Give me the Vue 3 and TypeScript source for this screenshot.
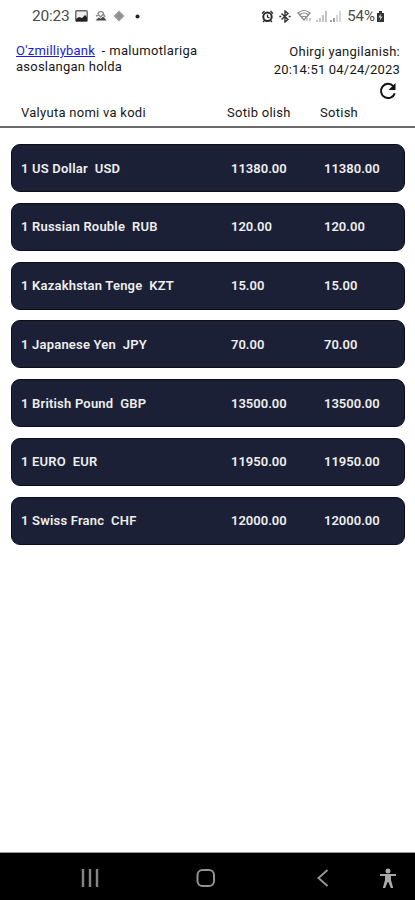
<script setup lang="ts">
interface Rate {
  name: string
  code: string
  buy: string
  sell: string
}

const rates: Rate[] = [
  { name: 'US Dollar', code: 'USD', buy: '11380.00', sell: '11380.00' },
  { name: 'Russian Rouble', code: 'RUB', buy: '120.00', sell: '120.00' },
  { name: 'Kazakhstan Tenge', code: 'KZT', buy: '15.00', sell: '15.00' },
  { name: 'Japanese Yen', code: 'JPY', buy: '70.00', sell: '70.00' },
  { name: 'British Pound', code: 'GBP', buy: '13500.00', sell: '13500.00' },
  { name: 'EURO', code: 'EUR', buy: '11950.00', sell: '11950.00' },
  { name: 'Swiss Franc', code: 'CHF', buy: '12000.00', sell: '12000.00' },
]
</script>

<template>
  <div class="screen">
    <header class="status">
      <div class="status-left">
        <span class="clock">20:23</span>
        <svg class="picture" width="13" height="12" viewBox="0 0 13 12">
          <rect x=".8" y=".8" width="11.4" height="10.4" rx="1" fill="#eee" stroke="#666" stroke-width="1.4" />
          <path d="M1 11V9l3-2 3 1 3-3 2 2v4z" fill="#222" />
        </svg>
        <svg class="weather" width="12" height="12" viewBox="0 0 13 12">
          <path d="M3 4a3.400 3.400 0 0 1 6.500-.5M1 6l3-1 2 2 3-3 2 3" fill="none" stroke="#888" stroke-width="1.500" />
          <path d="M.5 11 4 7.500l2 1.500 3-2.500 3.500 4.500z" fill="#444" />
        </svg>
        <svg class="diamond" width="12" height="12" viewBox="0 0 12 12">
          <path d="m6 .5 5.500 5.500L6 11.500.5 6z" fill="#999" />
          <path d="M3 6h6M6 3v6" stroke="#888" />
        </svg>
        <svg class="dot" width="5" height="5" viewBox="0 0 5 5"><circle cx="2.500" cy="2.500" r="2" fill="#222" /></svg>
      </div>
      <div class="status-right">
        <svg width="13" height="13" viewBox="0 0 13 13" fill="none" stroke="#292929">
          <circle cx="6.500" cy="6.800" r="4.200" stroke-width="2" />
          <path d="M1 3.500 3.500 1M12 3.500 9.500 1M2 12l2-2m7 2-2-2M6.500 4.500V7l2 1" stroke-width="1.300" />
        </svg>
        <svg class="bluetooth" width="12" height="13" viewBox="0 0 12 13" fill="none" stroke="#333" stroke-width="1.400">
          <path d="m2.500 3.500 6.500 6-3 2.500V1l3 2.500-6.500 6" />
          <path d="M.3 6.500h2m7.400 0h2" />
        </svg>
        <svg class="wifi" width="16" height="14" viewBox="0 0 16 14" fill="none" stroke="#858585" stroke-width="1.200">
          <path d="M1 4q5.500-5 12 0L7 11zM3 5.500q4-3 8 0M5 8q2-1.500 4 0" />
          <path d="M10 12V9m3 3V9" stroke="#aaa" />
        </svg>
        <svg class="signal" width="12" height="13" viewBox="0 0 12 13" stroke="#b4b4b4" stroke-width="1.600">
          <path d="M1 12v-2m3 2V8m3 4V5m3 7V1" />
        </svg>
        <svg class="signal second-signal" width="12" height="13" viewBox="0 0 12 13" stroke="#ccc" stroke-width="1.600">
          <path d="M1 12v-2m3 2V8" stroke="#888" /><path d="M7 12V5m3 7V1" />
        </svg>
        <span class="percent">54%</span>
        <svg class="battery" width="9" height="13" viewBox="0 0 9 13">
          <path d="M3 1h3v2h2v9H1V3h2z" fill="#333" />
          <path d="M5 3.500 2.500 7.500h2L3.500 11l3-4.500h-2z" fill="#ddd" />
        </svg>
      </div>
    </header>

    <section class="intro">
      <p class="source"><a class="bank">O'zmilliybank</a><span class="after"> - malumotlariga</span><br>asoslangan holda</p>
      <p class="updated"><span class="label">Ohirgi yangilanish:</span><br><span class="date">20:14:51 04/24/2023</span></p>
    </section>
    <div class="refresh">
      <svg width="18" height="18" viewBox="0 0 18 18">
        <path d="M14.300 4.100A7.100 7.100 0 1 0 15.800 11.300" fill="none" stroke="#111" stroke-width="2" />
        <path d="M16.500 1v7h-7z" fill="#111" />
      </svg>
    </div>
    <div class="columns">
      <span>Valyuta nomi va kodi</span>
      <span>Sotib olish</span>
      <span>Sotish</span>
    </div>

    <main class="list">
      <div v-for="rate in rates" :key="rate.code" class="card">
        <span class="name">1 {{ rate.name }}&nbsp; {{ rate.code }}</span>
        <span>{{ rate.buy }}</span>
        <span>{{ rate.sell }}</span>
      </div>
    </main>

    <nav class="nav">
      <svg width="18" height="18" viewBox="0 0 18 18" stroke="#858585" stroke-width="2.400"><path d="M2 0v18M9 0v18M16 0v18" /></svg>
      <svg class="home" width="20" height="18" viewBox="0 0 20 18"><rect x="1.500" y="1" width="16.500" height="16" rx="5" fill="none" stroke="#929292" stroke-width="2" /></svg>
      <svg class="back" width="12" height="18" viewBox="0 0 12 18"><path d="m10.500 1-9 8 9 8" fill="none" stroke="#929292" stroke-width="2" /></svg>
      <svg class="person" width="18" height="21" viewBox="0 0 18 21" fill="#aaa">
        <circle cx="9" cy="3" r="2.500" />
        <path d="M1 6h16v2h-5v4l2.200 8h-2.400L9.300 14h-.6l-2.500 6H3.800L6 12V8H1z" />
      </svg>
    </nav>
  </div>
</template>

<style>
body { background: #fff; }
</style>

<style scoped>
.screen {
  display: flex;
  flex-direction: column;
  box-sizing: border-box;
  width: 415px;
  height: 900px;
  overflow: hidden;
  background: #fff;
  color: #171717;
  font: 13px/16px Roboto, sans-serif;
  white-space: nowrap;
}
.screen svg { display: block; flex: none; }
.status {
  display: flex;
  justify-content: space-between;
  align-items: center;
  box-sizing: border-box;
  height: 32px;
  padding: 0 30px 0 32px;
  color: #4a4a4a;
}
.status-left, .status-right { display: flex; align-items: center; }
.clock { width: 43px; font-size: 15.500px; letter-spacing: -.2px; }
.weather { margin-left: 7px; }
.diamond { margin-left: 6px; }
.dot { margin-left: 10px; }
.bluetooth { margin-left: 5px; }
.wifi { margin-left: 6px; }
.signal { margin-left: 3px; }
.second-signal { margin-left: 2px; }
.percent { margin-left: 5px; font-size: 15px; }
.battery { margin-left: 1px; }
.intro {
  display: flex;
  justify-content: space-between;
  box-sizing: border-box;
  height: 50px;
  padding: 11px 15px 0 16px;
}
.source, .updated { margin: 0; }
.source { letter-spacing: .24px; }
.bank { color: #2118dc; text-decoration: underline; }
.after { margin-left: 3px; letter-spacing: .33px; }
.updated { line-height: 18px; text-align: right; }
.label { letter-spacing: .27px; }
.date { letter-spacing: .2px; }
.refresh {
  display: flex;
  justify-content: flex-end;
  height: 21px;
  padding-right: 18px;
}
.columns {
  display: grid;
  grid-template-columns: 206px 93px 1fr;
  align-items: center;
  box-sizing: border-box;
  height: 25px;
  padding: 0 0 4px 21px;
  border-bottom: 2px solid #6b6b6b;
  letter-spacing: .27px;
}
.list {
  display: flex;
  flex: 1;
  flex-direction: column;
  gap: 10.800px;
  padding: 16px 10px 0 11px;
}
.card {
  display: grid;
  grid-template-columns: 210px 93px 1fr;
  align-items: center;
  box-sizing: border-box;
  height: 48px;
  padding: 1px 0 0 9px;
  border: 1px solid #0a0c20;
  border-radius: 9px;
  background: #1c2036;
  color: #eee;
  font-weight: 600;
}
.name { letter-spacing: .2px; }
.nav {
  display: flex;
  align-items: center;
  box-sizing: border-box;
  height: 48px;
  padding: 3px 0 0 81px;
  border-top: 1px solid #999;
  background: #000;
}
.home { margin-left: 97px; }
.back { margin-left: 101px; }
.person { margin-left: 50px; }
</style>
